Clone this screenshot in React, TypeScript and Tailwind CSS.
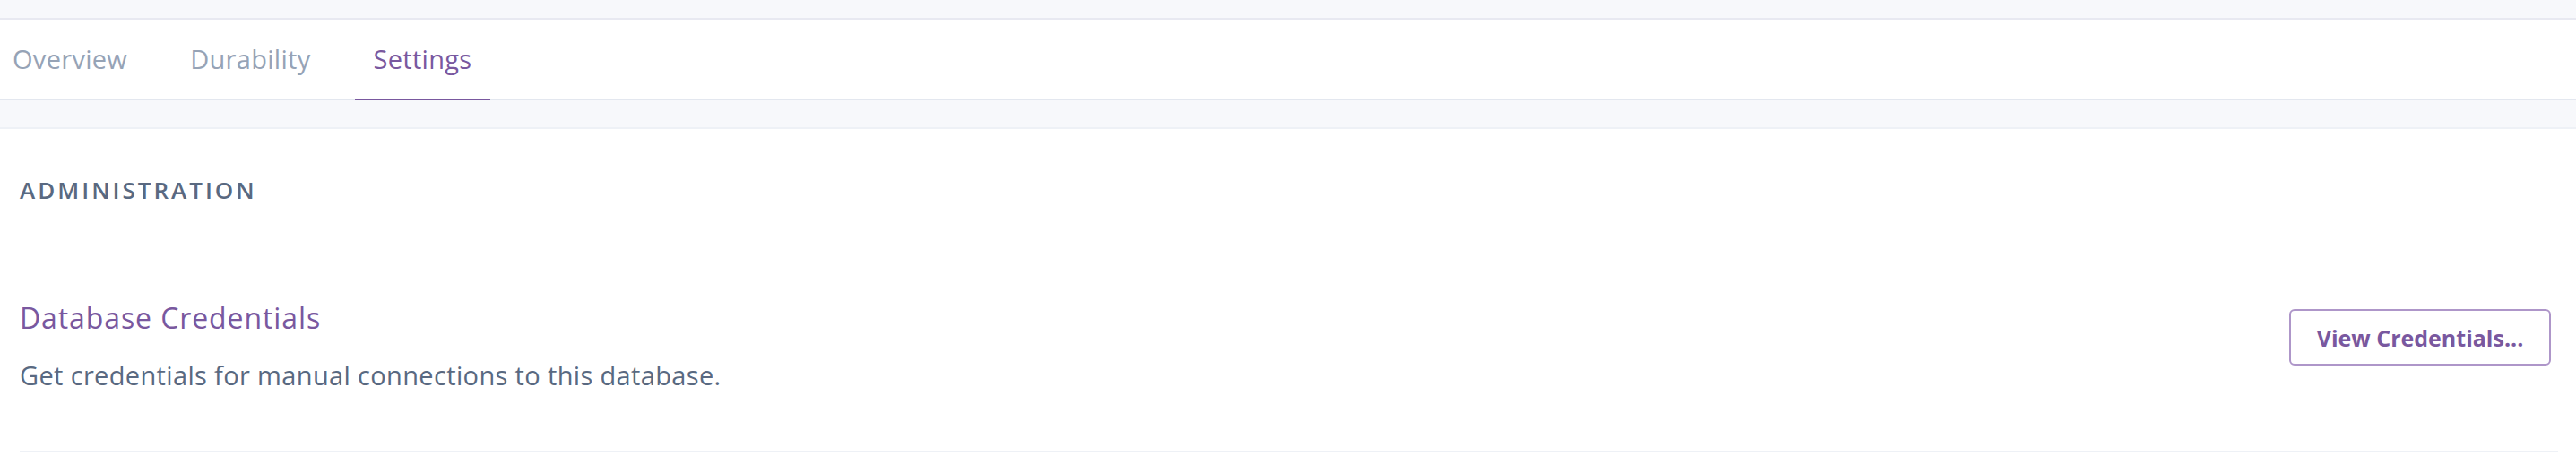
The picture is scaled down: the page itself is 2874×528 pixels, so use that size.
const TABS = ['Overview', 'Durability', 'Settings'];

export default function App() {
  const active = 'Settings';
  return (
    <div className="min-h-[528px] w-full bg-white font-['Open_Sans',sans-serif]">
      <div className="h-[22px] border-b-2 border-[#e8e9f1] bg-[#f7f8fb]" />
      <div className="flex h-[90px] border-b-2 border-[#e3e7ef] bg-white">
        <div className="-ml-[7px] flex gap-[28px]">
          {TABS.map((t) => (
            <div
              key={t}
              className={
                t === active
                  ? 'mb-[-2px] flex items-center border-b-2 border-[#79589f] px-[21px] text-[29px] leading-[30px] tracking-[0.3px] text-[#79589f]'
                  : 'flex items-center px-[21px] text-[29px] leading-[30px] tracking-[0.3px] text-[#96a3b6]'
              }
            >
              {t}
            </div>
          ))}
        </div>
      </div>
      <div className="h-[32px] border-b-2 border-[#eef1f6] bg-[#f7f8fb]" />
      <div className="pl-[22px] pr-[20px]">
        <div className="pt-[55px] text-[26px] font-semibold uppercase leading-[26px] tracking-[3px] text-[#596981]">Administration</div>
        <div className="mt-[114px] flex items-start justify-between border-b-2 border-[#eef1f6] pb-[70px] pr-[8px]">
          <div>
            <div className="text-[32px] leading-[31px] tracking-[0.9px] text-[#79589f]">Database Credentials</div>
            <div className="mt-[35px] text-[29px] leading-[28px] tracking-[0.35px] text-[#596981]">Get credentials for manual connections to this database.</div>
          </div>
          <button className="mt-[6px] flex h-[63px] w-[292px] items-center justify-center rounded-[6px] border-2 border-[#ae96c9] bg-white text-[25px] font-bold leading-[26px] text-[#79589f]">
            View Credentials...
          </button>
        </div>
      </div>
    </div>
  );
}
